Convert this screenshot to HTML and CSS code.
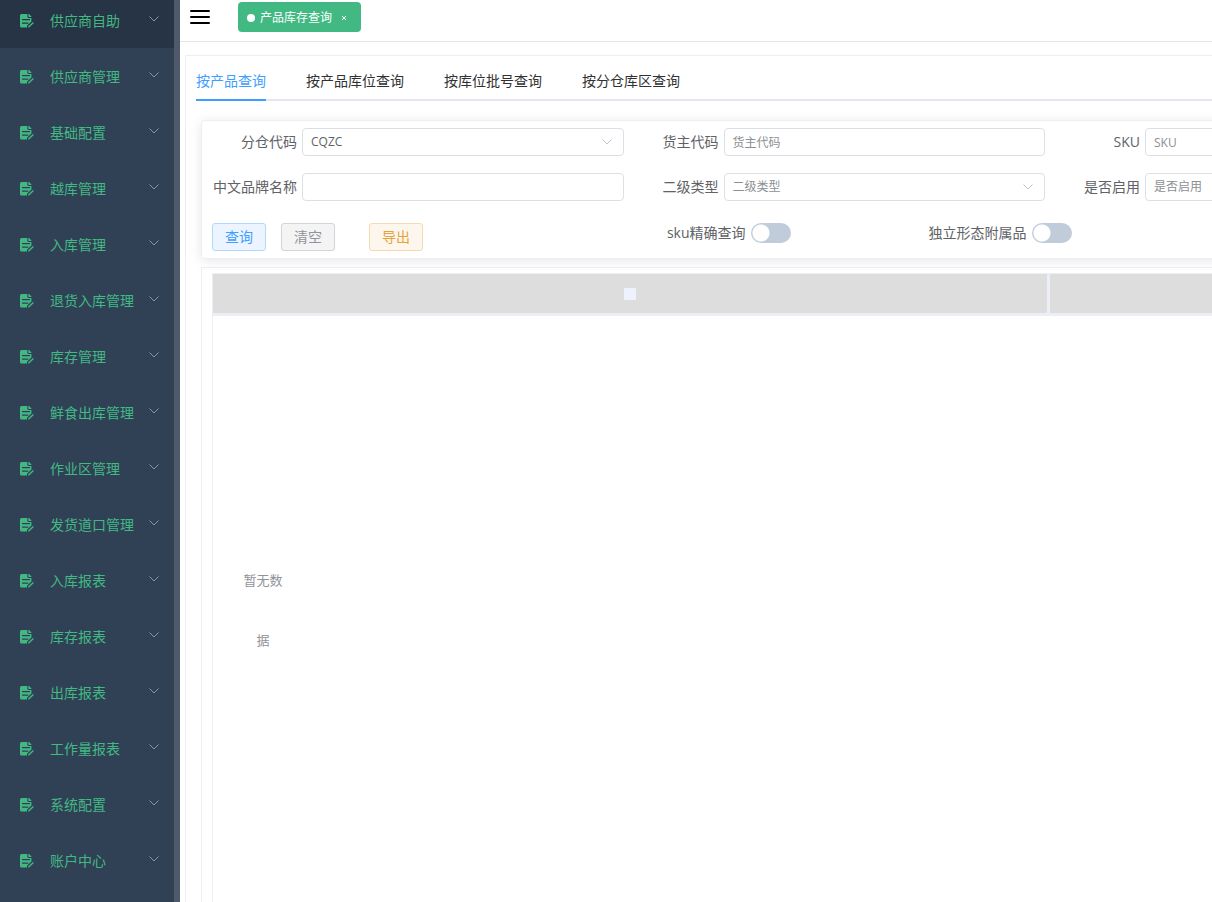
FILE: index.html
```html
<!DOCTYPE html>
<html lang="zh-CN">
<head>
<meta charset="utf-8">
<title>产品库存查询</title>
<link rel="stylesheet" href="styles.css">
</head>
<body>
<svg class="sprite" aria-hidden="true">
  <symbol id="icon-doc" viewBox="0 0 14 14">
    <path fill="currentColor" fill-rule="evenodd" d="M1.5 0H7.4V2.8Q7.4 4 8.6 4H11.4V7.6L7 11.8V13.4H1.5Q0 13.4 0 11.9V1.5Q0 0 1.5 0ZM2 5V6.3H10V5ZM2 8.4V9.7H8.4V8.4Z"/>
    <path fill="currentColor" d="M8.4 0H9L11.4 2.4V3.1H9.2Q8.4 3.1 8.4 2.3Z"/>
    <path d="M8.4 13.2L13.4 8.6" stroke="currentColor" stroke-width="1.4" fill="none"/>
  </symbol>
  <symbol id="icon-down" viewBox="0 0 12 12">
    <path d="M1.5 3.5L6 8L10.5 3.5" stroke="currentColor" fill="none"/>
  </symbol>
</svg>
<div class="app">
  <aside class="sidebar">
    <nav class="menu">
      <button class="menu-item is-active"><svg class="menu-icon"><use href="#icon-doc"/></svg><span class="menu-text">供应商自助</span><svg class="menu-arrow"><use href="#icon-down"/></svg></button>
      <button class="menu-item"><svg class="menu-icon"><use href="#icon-doc"/></svg><span class="menu-text">供应商管理</span><svg class="menu-arrow"><use href="#icon-down"/></svg></button>
      <button class="menu-item"><svg class="menu-icon"><use href="#icon-doc"/></svg><span class="menu-text">基础配置</span><svg class="menu-arrow"><use href="#icon-down"/></svg></button>
      <button class="menu-item"><svg class="menu-icon"><use href="#icon-doc"/></svg><span class="menu-text">越库管理</span><svg class="menu-arrow"><use href="#icon-down"/></svg></button>
      <button class="menu-item"><svg class="menu-icon"><use href="#icon-doc"/></svg><span class="menu-text">入库管理</span><svg class="menu-arrow"><use href="#icon-down"/></svg></button>
      <button class="menu-item"><svg class="menu-icon"><use href="#icon-doc"/></svg><span class="menu-text">退货入库管理</span><svg class="menu-arrow"><use href="#icon-down"/></svg></button>
      <button class="menu-item"><svg class="menu-icon"><use href="#icon-doc"/></svg><span class="menu-text">库存管理</span><svg class="menu-arrow"><use href="#icon-down"/></svg></button>
      <button class="menu-item"><svg class="menu-icon"><use href="#icon-doc"/></svg><span class="menu-text">鲜食出库管理</span><svg class="menu-arrow"><use href="#icon-down"/></svg></button>
      <button class="menu-item"><svg class="menu-icon"><use href="#icon-doc"/></svg><span class="menu-text">作业区管理</span><svg class="menu-arrow"><use href="#icon-down"/></svg></button>
      <button class="menu-item"><svg class="menu-icon"><use href="#icon-doc"/></svg><span class="menu-text">发货道口管理</span><svg class="menu-arrow"><use href="#icon-down"/></svg></button>
      <button class="menu-item"><svg class="menu-icon"><use href="#icon-doc"/></svg><span class="menu-text">入库报表</span><svg class="menu-arrow"><use href="#icon-down"/></svg></button>
      <button class="menu-item"><svg class="menu-icon"><use href="#icon-doc"/></svg><span class="menu-text">库存报表</span><svg class="menu-arrow"><use href="#icon-down"/></svg></button>
      <button class="menu-item"><svg class="menu-icon"><use href="#icon-doc"/></svg><span class="menu-text">出库报表</span><svg class="menu-arrow"><use href="#icon-down"/></svg></button>
      <button class="menu-item"><svg class="menu-icon"><use href="#icon-doc"/></svg><span class="menu-text">工作量报表</span><svg class="menu-arrow"><use href="#icon-down"/></svg></button>
      <button class="menu-item"><svg class="menu-icon"><use href="#icon-doc"/></svg><span class="menu-text">系统配置</span><svg class="menu-arrow"><use href="#icon-down"/></svg></button>
      <button class="menu-item"><svg class="menu-icon"><use href="#icon-doc"/></svg><span class="menu-text">账户中心</span><svg class="menu-arrow"><use href="#icon-down"/></svg></button>
    </nav>
  </aside>
  <main class="main">
    <header class="topbar">
      <button class="toggle" aria-label="菜单"><svg viewBox="0 0 20 16"><path d="M1 2H19M1 8H19M1 14H19" stroke="#000" stroke-width="2" stroke-linecap="round"/></svg></button>
      <a class="tag" href="#"><span class="tag-dot"></span><span>产品库存查询</span><svg class="tag-close" viewBox="0 0 6 6"><path d="M1 1L5 5M5 1L1 5" stroke="currentColor"/></svg></a>
    </header>
    <section class="panel">
      <div class="tabs" role="tablist">
        <button class="tab is-active" role="tab" aria-selected="true">按产品查询</button>
        <button class="tab" role="tab">按产品库位查询</button>
        <button class="tab" role="tab">按库位批号查询</button>
        <button class="tab" role="tab">按分仓库区查询</button>
      </div>
      <form class="card">
        <div class="fields">
          <div class="field"><label class="label" for="wh">分仓代码</label><div class="control"><select class="input" id="wh"><option>CQZC</option></select><svg class="arrow"><use href="#icon-down"/></svg></div></div>
          <div class="field"><label class="label" for="owner">货主代码</label><div class="control"><input class="input" id="owner" placeholder="货主代码"></div></div>
          <div class="field"><label class="label" for="sku">SKU</label><div class="control"><input class="input" id="sku" placeholder="SKU"></div></div>
        </div>
        <div class="fields">
          <div class="field"><label class="label" for="brand">中文品牌名称</label><div class="control"><input class="input" id="brand"></div></div>
          <div class="field"><label class="label" for="type">二级类型</label><div class="control"><select class="input is-empty" id="type"><option>二级类型</option></select><svg class="arrow"><use href="#icon-down"/></svg></div></div>
          <div class="field"><label class="label" for="enabled">是否启用</label><div class="control"><select class="input is-empty" id="enabled"><option>是否启用</option></select><svg class="arrow"><use href="#icon-down"/></svg></div></div>
        </div>
        <div class="actions">
          <div class="buttons">
            <button type="button" class="btn btn-primary">查询</button>
            <button type="button" class="btn btn-info">清空</button>
            <button type="button" class="btn btn-warning">导出</button>
          </div>
          <div class="switch-field"><label class="switch-label" for="exact">sku精确查询</label><input class="switch" type="checkbox" role="switch" id="exact"></div>
          <div class="switch-field"><label class="switch-label" for="alone">独立形态附属品</label><input class="switch" type="checkbox" role="switch" id="alone"></div>
        </div>
      </form>
      <div class="table-box">
        <table class="table">
          <thead><tr><th><input class="check" type="checkbox" aria-label="全选"></th><th></th></tr></thead>
          <tbody><tr><td class="empty" colspan="2"><p class="empty-text">暂无数据</p></td></tr></tbody>
        </table>
      </div>
    </section>
  </main>
</div>
</body>
</html>
```

FILE: styles.css
```css
* { box-sizing: border-box; }

body {
  margin: 0;
  overflow: hidden;
  color: #606266;
  background: #fff;
  font: 14px/20px "Open Sans", "Noto Sans CJK SC", sans-serif;
}

button, input, select { font: inherit; color: inherit; }
button { cursor: pointer; }

.sprite { display: none; }

.app { display: flex; height: 100vh; overflow: hidden; }

/* Sidebar */
.sidebar {
  flex: 0 0 180px;
  overflow: hidden;
  background: #304156;
  border-right: 6px solid #4e5969;
}
.menu { display: flex; flex-direction: column; margin-top: -8px; }
.menu-item {
  display: flex;
  align-items: center;
  flex: 0 0 56px;
  padding: 2px 14px 0 20px;
  border: 0;
  background: none;
  color: #42b983;
  text-align: left;
}
.menu-item.is-active { background: #263445; }
.menu-icon { width: 14px; height: 14px; margin-right: 16px; }
.menu-text { flex: 1; }
.menu-arrow { width: 12px; height: 12px; margin-bottom: 4px; color: #909399; }

/* Top bar */
.main { flex: 1 0 1725px; min-width: 0; }
.topbar {
  display: flex;
  align-items: center;
  gap: 28px;
  height: 42px;
  padding: 0 10px 8px;
  border-bottom: 1px solid #e6e6e6;
}
.toggle { width: 20px; height: 16px; padding: 0; border: 0; background: none; }
.toggle svg { display: block; }
.tag {
  display: flex;
  align-items: center;
  height: 30px;
  padding: 3px 14px 0 9px;
  border-radius: 4px;
  background: #42b983;
  color: #fff;
  font-size: 12px;
  text-decoration: none;
}
.tag-dot { width: 8px; height: 8px; margin-right: 5px; border-radius: 50%; background: #fff; }
.tag-close { width: 6px; height: 6px; margin-left: 9px; }

/* Panel and tabs */
.panel { margin: 13px 0 0 5px; padding: 5px 10px; border: 1px solid #ebeef5; }
.tabs { display: flex; gap: 40px; height: 40px; box-shadow: inset 0 -2px #e4e7ed; }
.tab { padding: 2px 0 0; border: 0; border-bottom: 2px solid transparent; background: none; color: #303133; }
.tab.is-active { border-color: #409eff; color: #409eff; }

/* Search card */
.card {
  margin: 19px 5px 8px;
  padding: 7px 0;
  border: 1px solid #ebeef5;
  border-radius: 4px;
  box-shadow: 0 2px 12px rgba(0, 0, 0, 0.1);
}
.fields { display: grid; grid-template-columns: repeat(4, minmax(0, 1fr)); margin-bottom: 17px; }
.field { display: flex; align-items: center; }
.label { flex: 0 0 100px; padding-right: 5px; text-align: right; }
.control { position: relative; flex: 1; }
.input {
  display: block;
  width: 100%;
  height: 28px;
  padding: 0 8px;
  border: 1px solid #dcdfe6;
  border-radius: 4px;
  background: #fff;
  font-size: 12px;
  appearance: none;
}
.input::placeholder, .input.is-empty { color: #8c8f94; opacity: 1; }
.arrow { position: absolute; top: 8px; right: 11px; width: 12px; height: 12px; color: #c0c4cc; pointer-events: none; }

.actions { display: grid; grid-template-columns: 6fr 4fr 4fr 10fr; padding-top: 5px; }
.buttons { display: flex; gap: 15px; padding-left: 10px; }
.btn { width: 54px; height: 28px; padding: 0; border: 1px solid; border-radius: 3px; }
.btn-primary { border-color: #b3d8ff; background: #ecf5ff; color: #409eff; }
.btn-info { border-color: #d3d4d6; background: #f4f4f5; color: #909399; }
.btn-warning { margin-left: 19px; border-color: #f5dab1; background: #fdf6ec; color: #e6a23c; }
.switch-field { display: flex; height: 20px; }
.switch-label { flex: 0 0 127px; padding-right: 5px; text-align: right; }
.switch {
  width: 40px;
  height: 20px;
  margin: 0;
  border-radius: 10px;
  background: radial-gradient(circle at 10px 10px, #fff 8px, #c0ccda 9px);
  appearance: none;
}

/* Table */
.table-box { margin: 0 5px; padding: 5px 0 0 10px; border: 1px solid #ebeef5; }
.table { width: 100%; table-layout: fixed; border-spacing: 0; border: 1px solid #ebeef5; }
.table th {
  height: 42px;
  padding: 0;
  border-right: 3px solid #ebeef5;
  border-bottom: 3px solid #ebeef5;
  background: #ddd;
  vertical-align: middle;
}
.check { display: block; width: 12px; height: 12px; margin: 0 auto; border-radius: 1px; background: #edf2fc; appearance: none; }
.empty { height: 588px; padding: 0; vertical-align: middle; }
.empty-text { width: 50px; margin: 0 25px; color: #909399; font-size: 13px; line-height: 60px; text-align: center; word-break: break-all; }
```
